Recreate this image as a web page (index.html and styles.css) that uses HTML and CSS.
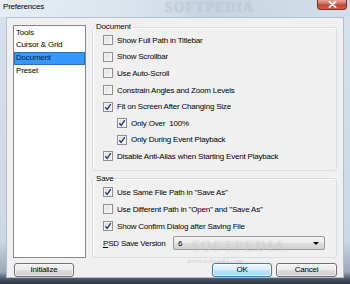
FILE: index.html
```html
<!DOCTYPE html>
<html>
<head>
<meta charset="utf-8">
<link rel="stylesheet" href="styles.css">
</head>
<body>
<div class="window">
  <div class="titlebar">
    <span class="title">Preferences</span>
    <span class="wm wm-title">SOFTPEDIA</span>
    <span class="close"><svg width="9" height="7" viewBox="0 0 9 7"><path d="M1.5 0.8 L7.5 6.2 M7.5 0.8 L1.5 6.2" stroke="#fff" stroke-width="1.8" stroke-linecap="round"/></svg></span>
  </div>
  <div class="client">
    <div class="listbox">
      <div class="item">Tools</div>
      <div class="item">Cursor &amp; Grid</div>
      <div class="item selected">Document</div>
      <div class="item">Preset</div>
    </div>
    <div class="groups">
      <fieldset class="group">
        <legend>Document</legend>
        <div class="rows doc-rows">
          <div class="row"><span class="cb"></span><span>Show Full Path in Titlebar</span></div>
          <div class="row"><span class="cb"></span><span>Show Scrollbar</span></div>
          <div class="row"><span class="cb"></span><span>Use Auto-Scroll</span></div>
          <div class="row"><span class="cb"></span><span>Constrain Angles and Zoom Levels</span></div>
          <div class="row"><span class="cb checked"><svg width="8" height="8" viewBox="0 0 8 8"><path d="M1.3 4.2 L3.2 6.4 L6.8 1.2" fill="none" stroke="#233d84" stroke-width="1.4"/></svg></span><span>Fit on Screen After Changing Size</span></div>
          <div class="row sub"><span class="cb checked"><svg width="8" height="8" viewBox="0 0 8 8"><path d="M1.3 4.2 L3.2 6.4 L6.8 1.2" fill="none" stroke="#233d84" stroke-width="1.4"/></svg></span><span>Only Over&nbsp; 100%</span></div>
          <div class="row sub"><span class="cb checked"><svg width="8" height="8" viewBox="0 0 8 8"><path d="M1.3 4.2 L3.2 6.4 L6.8 1.2" fill="none" stroke="#233d84" stroke-width="1.4"/></svg></span><span>Only During Event Playback</span></div>
          <div class="row"><span class="cb checked"><svg width="8" height="8" viewBox="0 0 8 8"><path d="M1.3 4.2 L3.2 6.4 L6.8 1.2" fill="none" stroke="#233d84" stroke-width="1.4"/></svg></span><span>Disable Anti-Alias when Starting Event Playback</span></div>
        </div>
      </fieldset>
      <fieldset class="group save">
        <legend>Save</legend>
        <div class="rows save-rows">
          <div class="row"><span class="cb checked"><svg width="8" height="8" viewBox="0 0 8 8"><path d="M1.3 4.2 L3.2 6.4 L6.8 1.2" fill="none" stroke="#233d84" stroke-width="1.4"/></svg></span><span>Use Same File Path in "Save As"</span></div>
          <div class="row"><span class="cb"></span><span>Use Different Path in "Open" and "Save As"</span></div>
          <div class="row"><span class="cb checked"><svg width="8" height="8" viewBox="0 0 8 8"><path d="M1.3 4.2 L3.2 6.4 L6.8 1.2" fill="none" stroke="#233d84" stroke-width="1.4"/></svg></span><span>Show Confirm Dialog after Saving File</span></div>
          <div class="row version"><span class="vlabel"><u>P</u>SD Save Version</span><span class="combo"><span class="cval">6</span><span class="arrow"></span></span></div>
        </div>
      </fieldset>
    </div>
    <div class="left-buttons"><span class="btn">Initialize</span></div>
    <div class="right-buttons"><span class="btn default">OK</span><span class="btn">Cancel</span></div>
    <span class="wm wm-bottom">SOFTPEDIA</span>
    <span class="wm wm-url">www.softpedia.com</span>
  </div>
</div>
</body>
</html>
```
FILE: styles.css
```css
html, body {
  margin: 0;
  padding: 0;
}
body {
  width: 350px;
  height: 284px;
  overflow: hidden;
  font-family: "Liberation Sans", Arial, sans-serif;
  font-size: 8px;
  letter-spacing: -0.2px;
  color: #000;
}
.window {
  position: relative;
  width: 350px;
  height: 284px;
  box-sizing: border-box;
  padding: 0 6px 6px;
  display: flex;
  flex-direction: column;
  background: linear-gradient(to bottom, #d6e1ec 0, #cbd8e5 240px, #9aa8b8 272px, #4a5566 279px, #2c3541 284px);
}
.titlebar {
  position: relative;
  height: 17px;
  margin: 0 -6px;
  padding-left: 3px;
  display: flex;
  align-items: flex-start;
  background: linear-gradient(to right, rgba(238,243,248,0.7) 0, rgba(224,232,240,0.45) 130px, rgba(182,196,211,0.45) 210px, rgba(196,209,222,0.35) 300px, rgba(204,216,229,0.3) 350px);
}
.title {
  line-height: 14px;
  font-size: 8px;
  color: #000;
}
.close {
  margin-left: auto;
  margin-right: 3px;
  width: 30px;
  height: 10px;
  box-sizing: border-box;
  border: 1px solid #7a2f27;
  border-top: none;
  border-radius: 0 0 4px 4px;
  background: linear-gradient(to bottom, #e9a99c 0, #d2685a 45%, #c2432f 55%, #d0644c 100%);
  display: flex;
  align-items: center;
  justify-content: center;
}
.close svg {
  display: block;
}
.wm {
  position: absolute;
  font-family: "Liberation Serif", serif;
  font-weight: bold;
  letter-spacing: 1px;
  pointer-events: none;
}
.wm-title {
  left: 165px;
  top: 0;
  font-size: 14px;
  line-height: 15px;
  color: rgba(214,224,235,0.5);
  text-shadow: 0 0 1px rgba(130,145,165,0.45);
}
.client {
  position: relative;
  flex: 1;
  box-sizing: border-box;
  background: #f0f0f0;
  border: 1px solid #b3bfcd;
  padding: 4px 6px 0;
  display: grid;
  grid-template-columns: 73px 245px;
  grid-template-rows: 236px 14px;
  column-gap: 6px;
  row-gap: 5px;
}
.listbox {
  margin-top: 3px;
  box-sizing: border-box;
  background: #fff;
  border: 1px solid #828790;
  padding-top: 0.5px;
}
.item {
  height: 12.7px;
  line-height: 12.7px;
  padding-left: 2px;
  white-space: nowrap;
}
.item.selected {
  background: #3399ff;
  color: #0c1d40;
  box-sizing: border-box;
  border: 1px solid #2a6fc0;
  padding-left: 1px;
  line-height: 10.7px;
}
.groups {
  display: flex;
  flex-direction: column;
}
.group {
  margin: 0;
  padding: 0;
  border: 1px solid #d5dfe5;
  border-radius: 3px;
  min-inline-size: 0;
  box-shadow: inset 1px 1px 0 #fff;
}
.group legend {
  padding: 0 1px;
  margin-left: 2px;
  line-height: 10px;
  font-size: 8px;
}
.group.save {
  margin-top: 3px;
}
.rows {
  padding: 0 0 5px 10px;
  display: flex;
  flex-direction: column;
}
.row {
  display: flex;
  align-items: center;
  gap: 4px;
  white-space: nowrap;
}
.doc-rows .row {
  height: 16.6px;
}
.save-rows .row {
  height: 17px;
}
.row.sub {
  padding-left: 14px;
}
.cb {
  width: 10px;
  height: 10px;
  box-sizing: border-box;
  border: 1px solid #8e8f8f;
  background: linear-gradient(135deg, #dadada 0, #eeeeee 60%, #fafafa 100%);
  box-shadow: inset 0 0 0 1px #f4f4f4;
  display: flex;
  align-items: center;
  justify-content: center;
  flex: none;
}
.cb svg {
  display: block;
}
.row.version {
  gap: 0;
}
.vlabel {
  width: 70px;
  flex: none;
}
.vlabel u {
  text-decoration-thickness: 1px;
  text-underline-offset: 1px;
}
.combo {
  width: 152px;
  height: 14px;
  box-sizing: border-box;
  border: 1px solid #9a9a9a;
  border-radius: 2px;
  background: linear-gradient(to bottom, #f3f3f3 0, #ececec 50%, #dfdfdf 50%, #d2d2d2 100%);
  display: flex;
  align-items: center;
  padding: 0 5px 0 4px;
}
.cval {
  flex: 1;
}
.arrow {
  width: 0;
  height: 0;
  border-left: 3px solid transparent;
  border-right: 3px solid transparent;
  border-top: 3px solid #000;
}
.left-buttons {
  display: flex;
  padding-left: 1px;
}
.right-buttons {
  display: flex;
  justify-content: flex-end;
  gap: 4px;
}
.btn {
  height: 14px;
  box-sizing: border-box;
  width: 60px;
  border: 1px solid #707070;
  border-radius: 3px;
  background: linear-gradient(to bottom, #f2f2f2 0, #ebebeb 50%, #dddddd 50%, #cfcfcf 100%);
  box-shadow: inset 0 0 0 1px rgba(255,255,255,0.6);
  display: flex;
  align-items: center;
  justify-content: center;
  line-height: 12px;
}
.right-buttons .btn:last-child {
  width: 61px;
}
.btn.default {
  border-color: #3c7fb1;
  background: linear-gradient(to bottom, #eaf6fd 0, #d9f0fc 50%, #bee6fd 50%, #a7d9f5 100%);
  box-shadow: inset 0 0 0 1px rgba(255,255,255,0.7), 0 0 1px #7fc4ee;
}
.wm-bottom {
  left: 184px;
  top: 220px;
  font-size: 15px;
  color: rgba(255,255,255,0.3);
  text-shadow: 0 0 1px rgba(150,150,150,0.4);
}
.wm-url {
  left: 180px;
  top: 239px;
  font-size: 7px;
  font-weight: normal;
  letter-spacing: 0;
  color: rgba(150,150,150,0.45);
}
```
